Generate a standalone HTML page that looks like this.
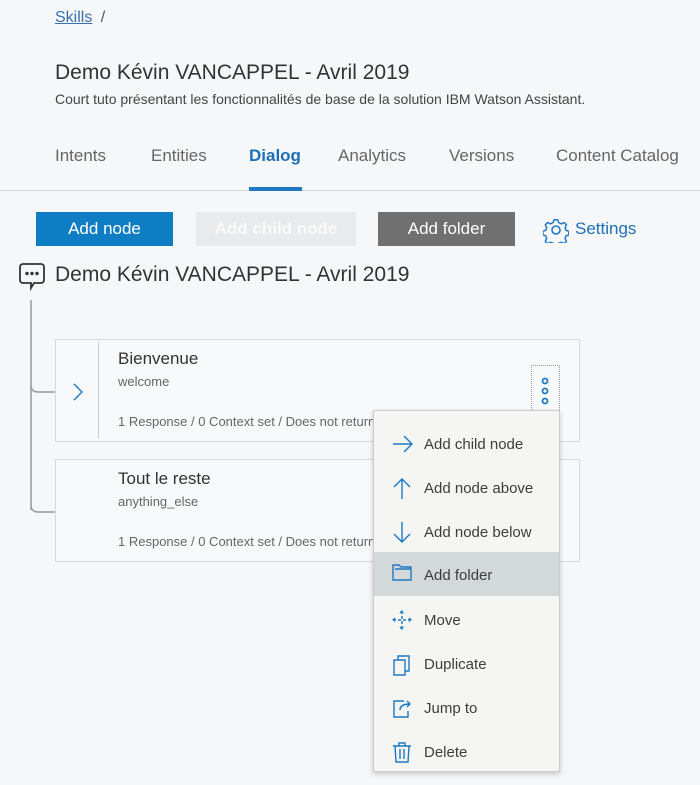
<!DOCTYPE html><html><head><style>
body{margin:0;width:700px;height:785px;background:#f6f7f8;font-family:"Liberation Sans",sans-serif;color:#3d3d3d;position:relative;overflow:hidden}
.a{position:absolute;white-space:nowrap}
.btn{position:absolute;top:212px;height:34px;width:137px;color:#fff;font-size:17px;text-align:center;line-height:34px}
.card{position:absolute;left:55px;width:523px;height:101px;border:1px solid #d6d9dc;background:#f8f9fa}
.mi{position:absolute;left:0;width:185px;height:44px;font-size:15px;line-height:44px;color:#3d3d3d}
.mi span{position:absolute;left:50px}
.mi svg{position:absolute;left:18px;top:11px}
</style></head><body>
<div class="a" style="left:55px;top:9px;font-size:16px;color:#3b6fb0"><u>Skills</u> <span style="color:#555;margin-left:4px">/</span></div>
<div class="a" style="left:55px;top:61px;font-size:21px;color:#333">Demo Kévin VANCAPPEL - Avril 2019</div>
<div class="a" style="left:55px;top:91px;font-size:14px;color:#444">Court tuto présentant les fonctionnalités de base de la solution IBM Watson Assistant.</div>
<div class="a" style="left:55px;top:146px;font-size:17px;color:#666">Intents</div>
<div class="a" style="left:151px;top:146px;font-size:17px;color:#666">Entities</div>
<div class="a" style="left:249px;top:146px;font-size:17px;color:#1e6fb5;font-weight:bold">Dialog</div>
<div class="a" style="left:338px;top:146px;font-size:17px;color:#666">Analytics</div>
<div class="a" style="left:449px;top:146px;font-size:17px;color:#666">Versions</div>
<div class="a" style="left:556px;top:146px;font-size:17px;color:#666">Content Catalog</div>
<div class="a" style="left:0;top:190px;width:700px;height:1px;background:#d4d6d8"></div>
<div class="a" style="left:249px;top:187px;width:53px;height:4px;background:#1e78c2"></div>
<div class="btn" style="left:36px;background:#0f7dc4">Add node</div>
<div class="btn" style="left:196px;width:160px;background:#e9eaeb;color:#fafafa;font-weight:bold">Add child node</div>
<div class="btn" style="left:378px;background:#707070">Add folder</div>
<svg class="a" style="left:543px;top:217px" width="26" height="26" viewBox="0 0 26 26" fill="none" stroke="#1e78c2" stroke-width="1.6"><circle cx="13" cy="13" r="4"/><path d="M11 2h4l1 3 3 1.5 3-1.5 2.5 2.5-1.5 3 1 3 3 1v4l-3 1-1 3 1.5 3-2.5 2.5-3-1.5-3 1-1 3h-4l-1-3-3-1-3 1.5-2.5-2.5 1.5-3-1-3-3-1v-4l3-1 1-3-1.5-3 2.5-2.5 3 1.5 3-1.5z" transform="scale(.92) translate(1 1)"/></svg>
<div class="a" style="left:575px;top:219px;font-size:17px;color:#1e6fb5">Settings</div>
<svg class="a" style="left:18px;top:262px" width="28" height="30" viewBox="0 0 28 30" fill="none" stroke="#333" stroke-width="1.8"><path d="M5 2h18a3 3 0 0 1 3 3v13a3 3 0 0 1-3 3H16l-3 5v-5H5a3 3 0 0 1-3-3V5a3 3 0 0 1 3-3z"/><circle cx="9" cy="11.5" r=".8" fill="#333"/><circle cx="14" cy="11.5" r=".8" fill="#333"/><circle cx="19" cy="11.5" r=".8" fill="#333"/></svg>
<div class="a" style="left:55px;top:263px;font-size:21px;color:#333">Demo Kévin VANCAPPEL - Avril 2019</div>
<svg class="a" style="left:25px;top:300px" width="35" height="220" fill="none" stroke="#999" stroke-width="1.5"><path d="M6 0v210M6 40v45q0 7 7 7h20M6 160v45q0 7 7 7h20"/></svg>
<div class="card" style="top:339px"><div class="a" style="left:42px;top:2px;width:1px;height:96px;background:#c9ccd0"></div>
<svg class="a" style="left:16px;top:43px" width="12" height="18" fill="none" stroke="#1e78c2" stroke-width="1.4"><path d="M2 1l8 8-8 8"/></svg>
<div class="a" style="left:62px;top:9px;font-size:17px;color:#333">Bienvenue</div>
<div class="a" style="left:62px;top:34px;font-size:13px;color:#666">welcome</div>
<div class="a" style="left:62px;top:74px;font-size:13px;color:#666">1 Response / 0 Context set / Does not return</div>
<div class="a" style="left:475px;top:25px;width:27px;height:45px;border:1px dotted #999"></div>
<svg class="a" style="left:483px;top:37px" width="12" height="30" fill="none" stroke="#1e78c2" stroke-width="1.8"><circle cx="6" cy="4" r="2.5"/><circle cx="6" cy="14" r="2.5"/><circle cx="6" cy="24" r="2.5"/></svg></div>
<div class="card" style="top:459px">
<div class="a" style="left:62px;top:9px;font-size:17px;color:#333">Tout le reste</div>
<div class="a" style="left:62px;top:34px;font-size:13px;color:#666">anything_else</div>
<div class="a" style="left:62px;top:74px;font-size:13px;color:#666">1 Response / 0 Context set / Does not return</div></div>
<div class="a" style="left:373px;top:410px;width:185px;height:360px;background:#f5f5f3;border:1px solid #ccc;box-shadow:0 2px 5px rgba(0,0,0,.2)">
<div class="mi" style="top:12px"><svg width="22" height="22" fill="none" stroke="#1e78c2" stroke-width="1.4"><path d="M1 10h19M12 2l8 8-8 8"/></svg><span>Add child node</span></div>
<div class="mi" style="top:56px"><svg width="22" height="22" fill="none" stroke="#1e78c2" stroke-width="1.4"><path d="M10 1v20M2 9l8-8 8 8"/></svg><span>Add node above</span></div>
<div class="mi" style="top:100px"><svg width="22" height="22" fill="none" stroke="#1e78c2" stroke-width="1.4"><path d="M10 0v20M2 12l8 8 8-8"/></svg><span>Add node below</span></div>
<div class="mi" style="top:141px;background:#d3d8d9;line-height:48px"><svg width="22" height="22" fill="none" stroke="#1e78c2" stroke-width="1.4" style="top:11px"><path d="M1 2h6l2 2h10v13H1zM3 6h16"/></svg><span>Add folder</span></div>
<div class="mi" style="top:188px"><svg width="22" height="22" fill="none" stroke="#1e78c2" stroke-width="1.4"><path d="M10 1v18M1 10h18M8 3l2-2 2 2M8 17l2 2 2-2M3 8l-2 2 2 2M17 8l2 2-2 2" stroke-dasharray="3 2"/></svg><span>Move</span></div>
<div class="mi" style="top:232px"><svg width="22" height="22" fill="none" stroke="#1e78c2" stroke-width="1.4"><path d="M2 6h11v15H2zM6 6V2h11v15h-4"/></svg><span>Duplicate</span></div>
<div class="mi" style="top:276px"><svg width="22" height="22" fill="none" stroke="#1e78c2" stroke-width="1.4"><path d="M12 3H2v16h14v-6M8 12c0-4 3-6 10-6M15 3l3 3-3 3"/></svg><span>Jump to</span></div>
<div class="mi" style="top:320px"><svg width="22" height="22" fill="none" stroke="#1e78c2" stroke-width="1.4"><path d="M1 4h18M7 4V1h6v3M3 4l1 16h12l1-16M8 7v10M12 7v10"/></svg><span>Delete</span></div>
</div>
</body></html>
